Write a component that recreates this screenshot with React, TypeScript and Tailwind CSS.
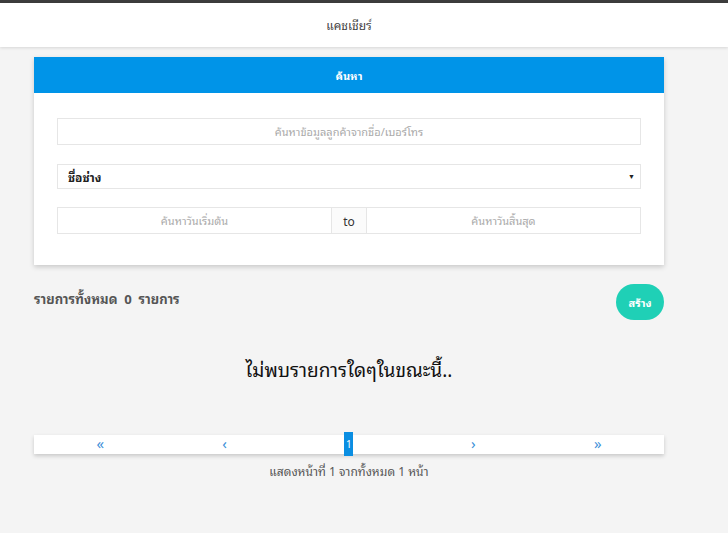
import React from "react";

export default function App() {
  const font = { fontFamily: '"Noto Sans Thai Looped", "Liberation Sans", "Noto Sans Thai", "Noto Sans", sans-serif' };
  return (
    <div className="min-h-[533px] w-full bg-[#f4f4f4]" style={font}>
      <div className="h-[3px] bg-[#3d3d3d]" />
      <div className="flex h-[44px] items-center justify-center bg-white pr-[30px] text-[12px] text-[#444] shadow-[0_1px_3px_rgba(0,0,0,0.12)]">
        แคชเชียร์
      </div>
      <div className="mx-[34px] mt-[10px] w-[630px]">
        <div className="bg-white shadow-[0_2px_5px_rgba(0,0,0,0.18)]">
          <div className="flex h-[36px] items-center justify-center bg-[#0094e8] text-[11px] font-bold text-white">
            ค้นหา
          </div>
          <div className="flex flex-col px-[23px] pt-[25px] pb-[31px]">
            <div className="flex h-[27px] items-center justify-center border border-[#e6e6e6] text-[11px] text-[#aaa]">
              ค้นหาข้อมูลลูกค้าจากชื่อ/เบอร์โทร
            </div>
            <div className="mt-[19px] flex h-[25px] items-center justify-between border border-[#e6e6e6] pl-[10px] pr-[5px] text-[12px] font-bold text-[#222]">
              <span>ชื่อช่าง</span>
              <span className="text-[7px]">▼</span>
            </div>
            <div className="mt-[18px] flex h-[27px] border border-[#e6e6e6] text-[11px] text-[#aaa]">
              <div className="flex flex-1 items-center justify-center">ค้นหาวันเริ่มต้น</div>
              <div className="flex w-[36px] items-center justify-center border-x border-[#e6e6e6] bg-[#fbfbfb] text-[12px] text-[#333]">
                to
              </div>
              <div className="flex flex-1 items-center justify-center">ค้นหาวันสิ้นสุด</div>
            </div>
          </div>
        </div>

        <div className="mt-[19px] flex items-center justify-between">
          <div className="-mt-[6px] text-[13px] font-bold text-[#555]">รายการทั้งหมด&nbsp; 0&nbsp; รายการ</div>
          <div className="flex h-[36px] w-[48px] items-center justify-center rounded-full bg-[#1fd0b6] text-[11px] font-bold text-white">
            สร้าง
          </div>
        </div>

        <div className="mt-[35px] flex justify-center text-[19px] text-[#111]">ไม่พบรายการใดๆในขณะนี้..</div>

        <div className="mt-[51px] grid h-[19px] grid-cols-5 items-center bg-white px-[4px] text-[15px] leading-none text-[#3a8fd8] shadow-[0_2px_4px_rgba(0,0,0,0.18)]">
          <div className="-mt-[3px] flex justify-center">«</div>
          <div className="-mt-[3px] flex justify-center">‹</div>
          <div className="flex justify-center">
            <div className="relative h-[19px] w-[9px]">
              <div className="absolute left-0 top-[-3px] flex h-[24px] w-[9px] items-center justify-center bg-[#0a8ee2] text-[10px] text-white">
                1
              </div>
            </div>
          </div>
          <div className="-mt-[3px] flex justify-center">›</div>
          <div className="-mt-[3px] flex justify-center">»</div>
        </div>

        <div className="mt-[8px] flex justify-center text-[12px] text-[#555]">แสดงหน้าที่ 1 จากทั้งหมด 1 หน้า</div>
      </div>
    </div>
  );
}
